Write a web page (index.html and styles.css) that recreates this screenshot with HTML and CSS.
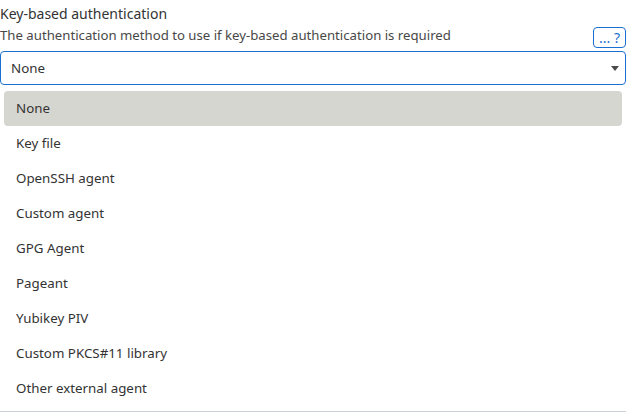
FILE: index.html
```html
<!DOCTYPE html>
<html>
<head>
<meta charset="utf-8">
<link rel="stylesheet" href="styles.css">
</head>
<body>
<div class="field">
  <div class="title">Key-based authentication</div>
  <div class="desc-row">
    <div class="desc">The authentication method to use if key-based authentication is required</div>
    <button class="more">... ?</button>
  </div>
  <div class="select">
    <span class="value">None</span>
    <svg class="caret" width="8" height="5" viewBox="0 0 8 5"><path d="M0 0H8L4 5Z" fill="#4a4a4a"/></svg>
  </div>
  <ul class="list">
    <li class="item active">None</li>
    <li class="item">Key file</li>
    <li class="item">OpenSSH agent</li>
    <li class="item">Custom agent</li>
    <li class="item">GPG Agent</li>
    <li class="item">Pageant</li>
    <li class="item">Yubikey PIV</li>
    <li class="item">Custom PKCS#11 library</li>
    <li class="item">Other external agent</li>
  </ul>
</div>
</body>
</html>
```
FILE: styles.css
```css
html, body {
  margin: 0;
  padding: 0;
  background: #fff;
  overflow: hidden;
}
body {
  font-family: "Noto Sans", sans-serif;
  color: #333;
  width: 626px;
  height: 413px;
}
.field {
  display: flex;
  flex-direction: column;
}
.title {
  font-size: 14px;
  line-height: 19px;
  padding-top: 4px;
  color: #333;
}
.desc-row {
  display: flex;
  align-items: flex-end;
  justify-content: space-between;
  height: 28px;
}
.desc {
  font-size: 13.2px;
  line-height: 18px;
  color: #484848;
  padding-bottom: 7px;
}
.more {
  box-sizing: border-box;
  width: 33px;
  height: 21px;
  margin-bottom: 3px;
  border: 1px solid #1a6fd0;
  border-radius: 4px;
  background: #fff;
  color: #1a6fd0;
  font-family: "Noto Sans", sans-serif;
  font-size: 14px;
  line-height: 18px;
  padding: 0;
}
.select {
  box-sizing: border-box;
  height: 34px;
  border: 1px solid #1a6fd0;
  border-radius: 4px;
  display: flex;
  align-items: center;
  justify-content: space-between;
  padding: 0 6px 0 10px;
  font-size: 13.33px;
}
.caret {
  display: block;
}
.list {
  list-style: none;
  margin: 6px 0 0;
  padding: 0 4px;
  border-bottom: 1px solid #ccd2d7;
  height: 320px;
  box-sizing: content-box;
}
.item {
  height: 35px;
  line-height: 35px;
  padding-left: 12px;
  font-size: 13.33px;
  border-radius: 4px;
}
.item.active {
  background: #d6d6d1;
}
```
